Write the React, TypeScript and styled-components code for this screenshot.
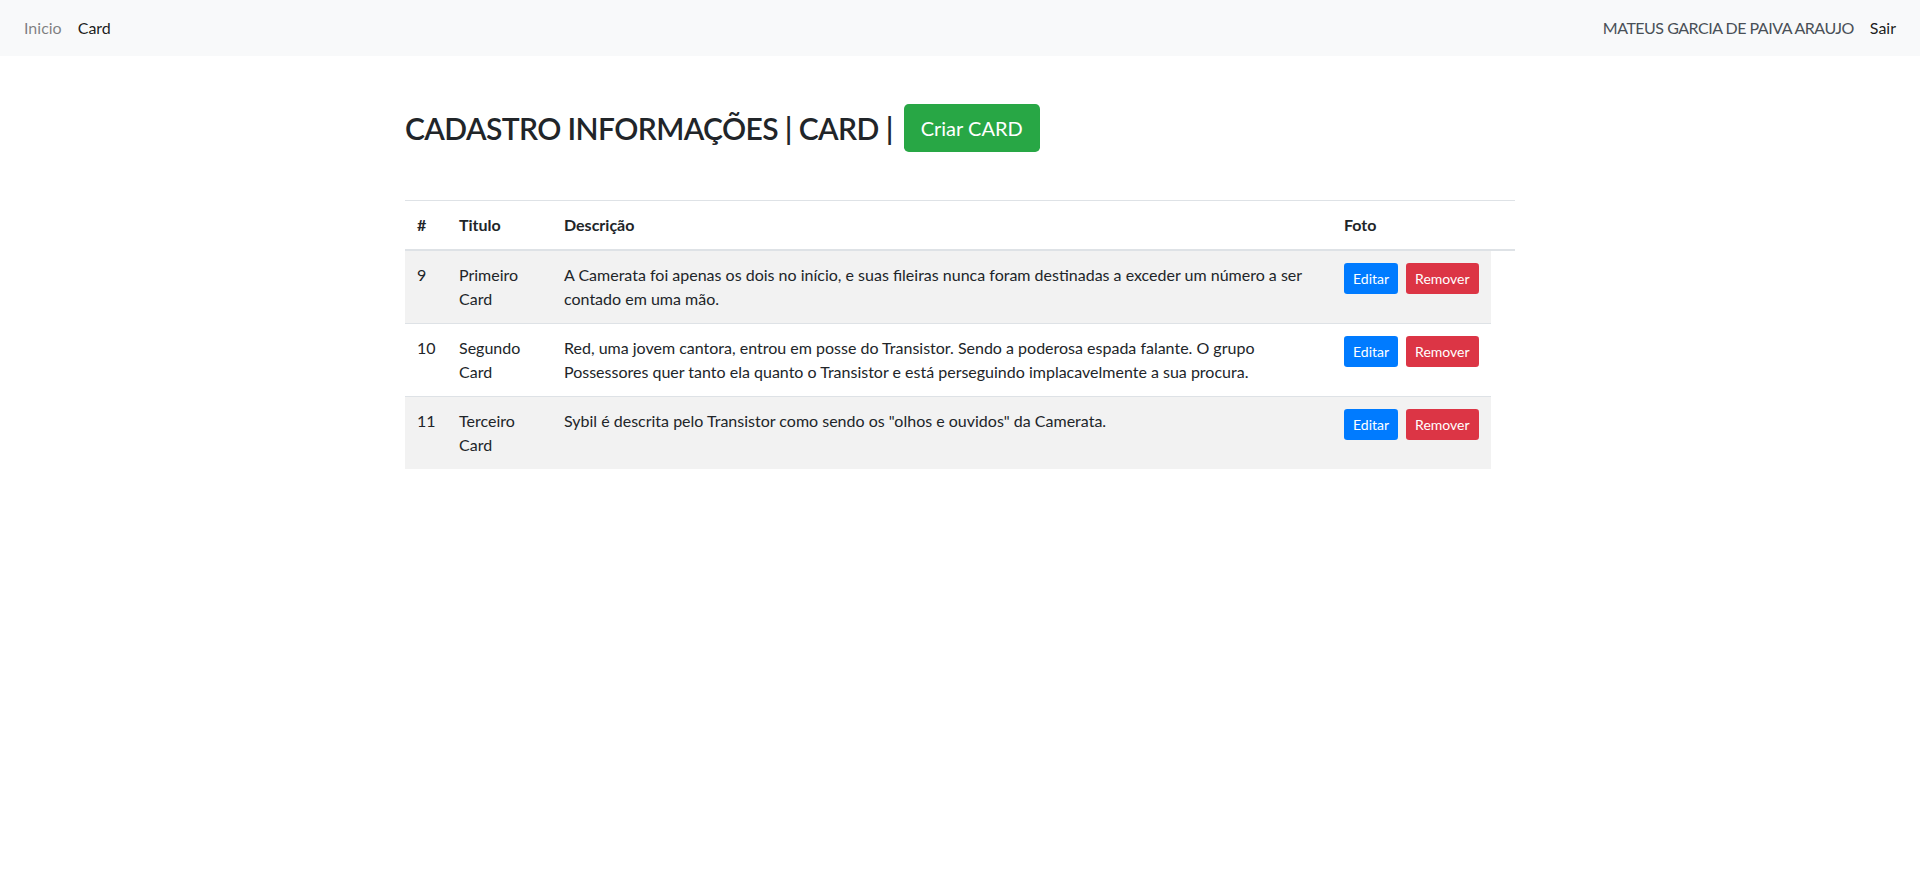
import React from 'react'
import styled, { createGlobalStyle } from 'styled-components'

const GlobalStyle = createGlobalStyle`
  * { box-sizing: border-box; }
  body {
    margin: 0;
    font-family: Lato, "Open Sans", sans-serif;
    font-size: 16px;
    line-height: 1.5;
    color: #212529;
    background: #fff;
  }
`

const cards = [
  {
    id: 9,
    titulo: 'Primeiro Card',
    descricao:
      'A Camerata foi apenas os dois no início, e suas fileiras nunca foram destinadas a exceder um número a ser contado em uma mão.',
  },
  {
    id: 10,
    titulo: 'Segundo Card',
    descricao:
      'Red, uma jovem cantora, entrou em posse do Transistor. Sendo a poderosa espada falante. O grupo Possessores quer tanto ela quanto o Transistor e está perseguindo implacavelmente a sua procura.',
  },
  {
    id: 11,
    titulo: 'Terceiro Card',
    descricao: 'Sybil é descrita pelo Transistor como sendo os "olhos e ouvidos" da Camerata.',
  },
]

const Navbar = styled.nav`
  display: flex;
  justify-content: space-between;
  align-items: center;
  height: 56px;
  padding: 8px 16px;
  background: #f8f9fa;
`

const NavGroup = styled.div`
  display: flex;
  align-items: center;
`

const NavLink = styled.a<{ $tone?: 'muted' | 'active' | 'user' }>`
  display: block;
  padding: 8px;
  text-decoration: none;
  cursor: pointer;
  letter-spacing: ${(p) => (p.$tone === 'user' ? '-0.5px' : 'normal')};
  color: ${(p) =>
    p.$tone === 'muted' ? 'rgba(0,0,0,.5)' : p.$tone === 'user' ? '#495057' : 'rgba(0,0,0,.9)'};
`

const Container = styled.main`
  width: 1140px;
  margin: 0 auto;
  padding: 48px 15px 0;
`

const TitleRow = styled.div`
  display: flex;
  align-items: center;
  gap: 11px;
  height: 48px;
  margin-bottom: 48px;
`

const Title = styled.h2`
  margin: 0;
  font-size: 30px;
  font-weight: 600;
  letter-spacing: -0.6px;
  line-height: 1.2;
`

const Button = styled.button<{ $variant: 'success' | 'primary' | 'danger'; $size: 'lg' | 'sm' }>`
  font-family: inherit;
  border: 1px solid transparent;
  color: #fff;
  cursor: pointer;
  background: ${(p) =>
    p.$variant === 'success' ? '#28a745' : p.$variant === 'primary' ? '#007bff' : '#dc3545'};
  font-size: ${(p) => (p.$size === 'lg' ? '20px' : '14px')};
  line-height: 1.5;
  padding: ${(p) => (p.$size === 'lg' ? '8px 16px' : '4px 8px')};
  border-radius: ${(p) => (p.$size === 'lg' ? '4.8px' : '3.2px')};
`

const Table = styled.table`
  width: 100%;
  table-layout: fixed;
  border-collapse: collapse;
  color: #212529;
`

const Th = styled.th<{ $width: number }>`
  width: ${(p) => p.$width}px;
  padding: 12px;
  text-align: left;
  vertical-align: bottom;
  font-weight: 700;
  border-top: 1px solid #dee2e6;
  border-bottom: 2px solid #dee2e6;
`

const Row = styled.tr`
  &:nth-of-type(odd) {
    background: rgba(0, 0, 0, 0.05);
  }
`

const Td = styled.td`
  padding: 12px;
  vertical-align: top;
  border-top: 1px solid #dee2e6;
`

const Actions = styled.div`
  display: flex;
  gap: 8px;
`

export default function App() {
  return (
    <>
      <GlobalStyle />
      <Navbar>
        <NavGroup>
          <NavLink $tone="muted">Inicio</NavLink>
          <NavLink $tone="active">Card</NavLink>
        </NavGroup>
        <NavGroup>
          <NavLink $tone="user">MATEUS GARCIA DE PAIVA ARAUJO</NavLink>
          <NavLink $tone="active">Sair</NavLink>
        </NavGroup>
      </Navbar>
      <Container>
        <TitleRow>
          <Title>CADASTRO INFORMAÇÕES | CARD |</Title>
          <Button $variant="success" $size="lg">Criar CARD</Button>
        </TitleRow>
        <Table>
          <thead>
            <tr>
              <Th $width={42}>#</Th>
              <Th $width={105}>Titulo</Th>
              <Th $width={780}>Descrição</Th>
              <Th $width={159}>Foto</Th>
              <Th $width={24}></Th>
            </tr>
          </thead>
          <tbody>
            {cards.map((card) => (
              <Row key={card.id}>
                <Td>{card.id}</Td>
                <Td>{card.titulo}</Td>
                <Td>{card.descricao}</Td>
                <Td>
                  <Actions>
                    <Button $variant="primary" $size="sm">Editar</Button>
                    <Button $variant="danger" $size="sm">Remover</Button>
                  </Actions>
                </Td>
              </Row>
            ))}
          </tbody>
        </Table>
      </Container>
    </>
  )
}
